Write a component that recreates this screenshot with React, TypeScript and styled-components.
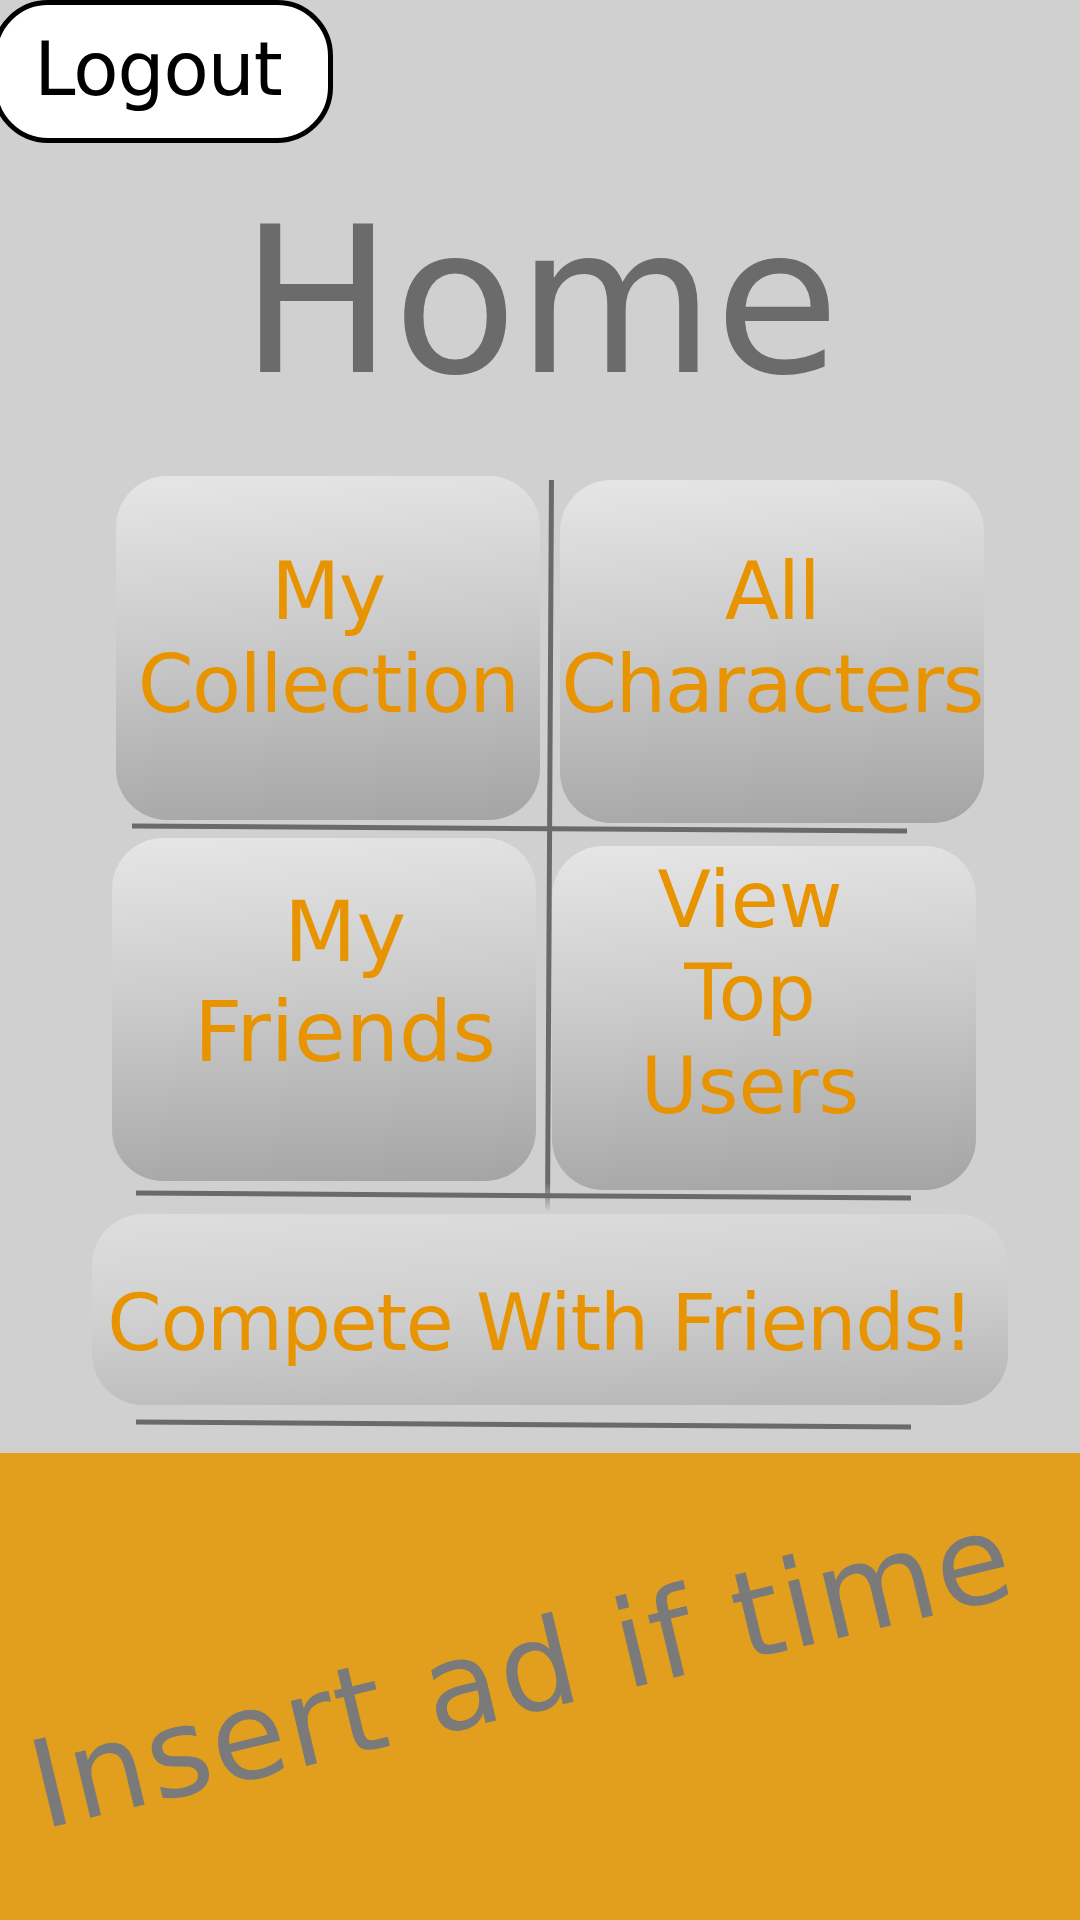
import React from "react";
import styled, { createGlobalStyle } from "styled-components";

const Global = createGlobalStyle`
  html, body {
    margin: 0;
    padding: 0;
    background: #d0d0d0;
  }
  body {
    font-family: "DejaVu Sans", "Liberation Sans", sans-serif;
  }
  #root {
    width: 1080px;
    height: 1920px;
    overflow: hidden;
  }
`;

const Page = styled.div`
  width: 1080px;
  height: 1920px;
  display: flex;
  flex-direction: column;
  background: #d0d0d0;
  overflow: hidden;
`;

const TopBar = styled.header`
  display: flex;
  height: 143px;
  flex: none;
`;

const LogoutButton = styled.button`
  margin-left: -8px;
  width: 341px;
  height: 143px;
  box-sizing: border-box;
  border: 5px solid #000;
  border-radius: 56px;
  background: #fff;
  color: #000;
  padding: 0 9px 6px 0;
  display: flex;
  align-items: center;
  justify-content: center;
  font-family: "DejaVu Sans", "Liberation Sans", sans-serif;
  font-size: 74px;
  letter-spacing: -1px;
  line-height: 1;
`;

const Title = styled.h1`
  margin: 58px 0 0;
  flex: none;
  text-align: center;
  font-family: "DejaVu Sans", "Liberation Sans", sans-serif;
  font-weight: normal;
  font-size: 203px;
  line-height: 203px;
  color: #6b6b6b;
`;

const Board = styled.section`
  position: relative;
  flex: none;
  margin-top: 72px;
  padding-left: 116px;
  display: flex;
  flex-direction: column;
  align-items: flex-start;
`;

const Row = styled.div`
  display: flex;
  align-items: flex-start;
`;

const Tile = styled.button<{
  $w: number;
  $h: number;
  $mt?: number;
  $ml?: number;
  $pad?: string;
  $size: number;
  $lh: number;
  $ls?: number;
  $soft?: boolean;
}>`
  flex: none;
  width: ${(p) => p.$w}px;
  height: ${(p) => p.$h}px;
  margin-top: ${(p) => p.$mt ?? 0}px;
  margin-left: ${(p) => p.$ml ?? 0}px;
  padding: ${(p) => p.$pad ?? "0"};
  box-sizing: border-box;
  border: none;
  border-radius: 51px;
  background: ${(p) =>
    p.$soft
      ? "linear-gradient(177deg, #dedede 0%, #d0d0d0 45%, #b5b5b5 100%)"
      : "linear-gradient(176deg, #e6e6e6 0%, #cbcbcb 45%, #a4a4a4 100%)"};
  display: flex;
  align-items: center;
  justify-content: center;
  text-align: center;
  white-space: nowrap;
  font-family: "DejaVu Sans", "Liberation Sans", sans-serif;
  font-size: ${(p) => p.$size}px;
  line-height: ${(p) => p.$lh}px;
  letter-spacing: ${(p) => p.$ls ?? 0}px;
  color: #e89400;
`;

const Divider = styled.div<{ $mt: number; $ml: number }>`
  flex: none;
  width: 775px;
  height: 5px;
  margin-top: ${(p) => p.$mt}px;
  margin-left: ${(p) => p.$ml}px;
  background: #6a6a6a;
  transform: rotate(0.37deg);
`;

const VerticalRule = styled.div`
  position: absolute;
  top: 4px;
  left: 547px;
  width: 5px;
  height: 732px;
  background: linear-gradient(
    to bottom,
    #6a6a6a 0%,
    #6a6a6a 96%,
    rgba(106, 106, 106, 0) 100%
  );
  transform: rotate(0.31deg);
  pointer-events: none;
`;

const AdBand = styled.footer`
  flex: 1;
  margin-top: 26px;
  background: #e29f1e;
  display: flex;
  align-items: center;
  justify-content: center;
  overflow: hidden;
`;

const AdText = styled.span`
  display: block;
  white-space: nowrap;
  font-family: "DejaVu Sans", "Liberation Sans", sans-serif;
  font-size: 122px;
  letter-spacing: 2px;
  line-height: 1;
  color: #7a7a7a;
  transform: translate(-19px, -16px) rotate(-13.5deg);
`;

const Lines = ({ lines }: { lines: string[] }) => (
  <span>
    {lines.map((l, i) => (
      <React.Fragment key={i}>
        {i > 0 && <br />}
        {l}
      </React.Fragment>
    ))}
  </span>
);

export default function App() {
  return (
    <Page>
      <Global />
      <TopBar>
        <LogoutButton>Logout</LogoutButton>
      </TopBar>
      <Title>Home</Title>
      <Board>
        <Row>
          <Tile $w={424} $h={344} $size={80} $lh={93} $ls={-1.5} $pad="0 0 20px 0">
            <Lines lines={["My", "Collection"]} />
          </Tile>
          <Tile
            $w={424}
            $h={343}
            $ml={20}
            $mt={4}
            $size={80}
            $lh={93}
            $ls={-1.5}
            $pad="0 0 27px 0"
          >
            <Lines lines={["All", "Characters"]} />
          </Tile>
        </Row>
        <Divider $mt={3} $ml={16} />
        <Row>
          <Tile
            $w={424}
            $h={343}
            $ml={-4}
            $mt={7}
            $size={84}
            $lh={100}
            $pad="0 0 55px 42px"
          >
            <Lines lines={["My", "Friends"]} />
          </Tile>
          <Tile
            $w={424}
            $h={344}
            $ml={16}
            $mt={15}
            $size={78}
            $lh={93}
            $pad="0 28px 50px 0"
          >
            <Lines lines={["View", "Top", "Users"]} />
          </Tile>
        </Row>
        <Divider $mt={3} $ml={20} />
        <Tile
          $w={916}
          $h={191}
          $ml={-24}
          $mt={16}
          $size={78}
          $lh={91}
          $ls={-1.3}
          $pad="27px 20px 0 0"
          $soft
        >
          <Lines lines={["Compete With Friends!"]} />
        </Tile>
        <Divider $mt={17} $ml={20} />
        <VerticalRule />
      </Board>
      <AdBand>
        <AdText>Insert ad if time</AdText>
      </AdBand>
    </Page>
  );
}
